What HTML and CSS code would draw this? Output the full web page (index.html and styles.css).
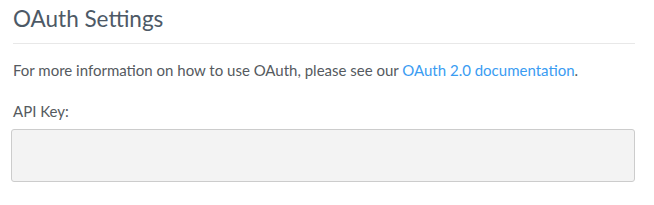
FILE: index.html
```html
<!DOCTYPE html>
<html>
<head>
<meta charset="utf-8">
<link rel="stylesheet" href="styles.css">
</head>
<body>
<div class="panel">
  <h2 class="title">OAuth Settings</h2>
  <p class="info">For more information on how to use OAuth, please see our <a class="link" href="#">OAuth 2.0 documentation</a>.</p>
  <label class="label">API Key:</label>
  <div class="field"></div>
</div>
</body>
</html>
```
FILE: styles.css
```css
html, body {
  margin: 0;
  padding: 0;
  background: #ffffff;
}
.panel {
  width: 624px;
  padding: 0 19px 0 11px;
  font-family: Lato, "Liberation Sans", sans-serif;
  color: #555a60;
}
.title {
  margin: 0 0 0 2px;
  padding: 5px 0 10px;
  font-size: 22.5px;
  font-weight: 400;
  line-height: 28px;
  color: #4d5966;
  border-bottom: 1px solid #e8e8e8;
}
.info {
  margin: 16px 0 0 2px;
  font-size: 15px;
  line-height: 20px;
}
.link {
  color: #3a9cf2;
  text-decoration: none;
}
.label {
  display: block;
  margin: 21px 0 0 2px;
  font-size: 15px;
  line-height: 20px;
}
.field {
  margin-top: 8px;
  height: 51px;
  background: #f3f3f3;
  border: 1px solid #cccccc;
  border-radius: 3px;
}
```
